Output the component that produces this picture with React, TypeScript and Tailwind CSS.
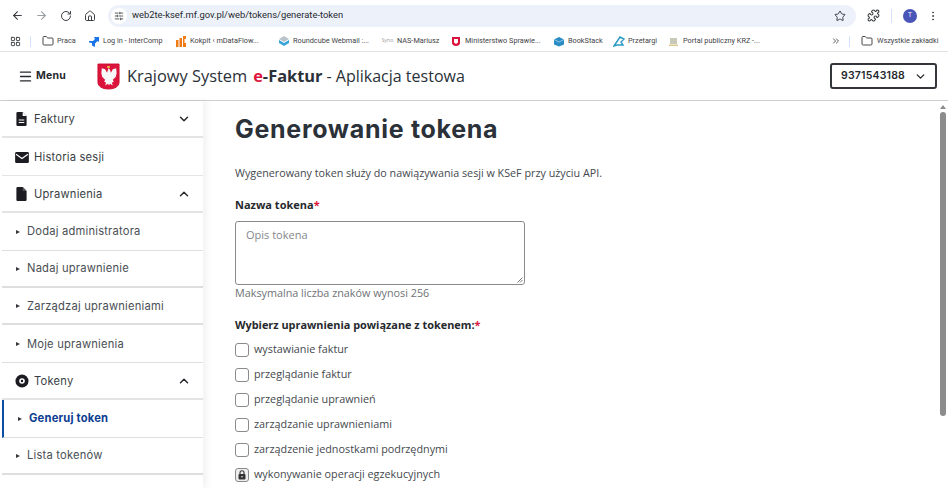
import { ArrowLeft, ArrowRight, RotateCw, House, SlidersHorizontal, Star, Puzzle, EllipsisVertical, LayoutGrid, Folder, Menu, ChevronDown, ChevronUp, ChevronsRight } from "lucide-react";

const open = "font-['Open_Sans',sans-serif]";
const mont = "font-['Inter',sans-serif]";
const roboto = "font-['Roboto',sans-serif]";

function Eagle() {
  return (
    <svg width="23" height="27" viewBox="0 0 24 28">
      <path d="M1 1h22v19c0 4-4 7-11 7S1 24 1 20z" fill="#dc143c" stroke="#c9112f" />
      <path d="M12 5l1.500 2 1 3 2-3.500 3.500-1 .5 5-1 4-3 3 1 2-2 1 1 3-3-2-1 2-1-2-3 2 1-3-2-1 1-2-3-3-1-4 .5-5 3.500 1 2 3.500 1-3z" fill="#f7f7f7" />
      <path d="M10.500 3h3v2h-3z" fill="#e5b53b" />
    </svg>
  );
}

function FileIcon({ lines }: { lines?: boolean }) {
  return (
    <svg width="11" height="14" viewBox="0 0 14 17" preserveAspectRatio="none">
      <path d="M2 0h6.500L13.500 5v10.500a1.500 1.500 0 0 1-1.500 1.500H2a1.500 1.500 0 0 1-1.500-1.500v-14A1.500 1.500 0 0 1 2 0z" fill="#1c1c22" />
      <path d="M8.500 0v5h5z" fill={lines ? "#fff" : "#55555c"} />
      {lines && <path d="M3.500 9h7v1.400h-7zM3.500 12h7v1.400h-7z" fill="#fff" />}
    </svg>
  );
}

function Mail() {
  return (
    <svg width="14" height="11" viewBox="0 0 15 12">
      <rect width="15" height="12" rx="1.500" fill="#1c1c22" />
      <path d="M1 2.500l6.500 4.500L14 2.500" stroke="#fff" strokeWidth="1.300" fill="none" />
    </svg>
  );
}

function TokenIcon() {
  return (
    <svg width="14" height="14" viewBox="0 0 15 15">
      <circle cx="7.500" cy="7.500" r="7" fill="#1c1c22" />
      <circle cx="7.500" cy="7.500" r="3" fill="#fff" />
      <circle cx="7.500" cy="7.500" r="1.300" fill="#1c1c22" />
    </svg>
  );
}

function Bookmark({ w, icon, label }: { w: string; icon: React.ReactNode; label: string }) {
  return (
    <div className={`flex items-center gap-[3px] shrink-0 ${w}`}>
      <span className="flex w-[13px] shrink-0 items-center justify-center">{icon}</span>
      <span className={`text-[7.300px] text-[#3f4347] whitespace-nowrap ${roboto}`}>{label}</span>
    </div>
  );
}

function Row({ icon, label, chev, thin }: { icon: React.ReactNode; label: string; chev?: "up" | "down"; thin?: boolean }) {
  return (
    <div className={`flex h-[37.4px] items-center pl-[12px] pr-[12px] pt-[1px] border-[#e4e4e4] ${thin ? "border-b" : "border-b-2"}`}>
      <span className="flex w-[15px] justify-center shrink-0">{icon}</span>
      <span className="ml-[5px] text-[11.200px] text-[#3a3f45] tracking-[0.2px]">{label}</span>
      {chev === "down" && <ChevronDown size={14} strokeWidth={2.500} className="ml-auto text-[#26292d]" />}
      {chev === "up" && <ChevronUp size={14} strokeWidth={2.500} className="ml-auto text-[#26292d]" />}
    </div>
  );
}

function SubRow({ label, active, thick }: { label: string; active?: boolean; thick?: boolean }) {
  return (
    <div className={`flex h-[37.4px] items-center pt-[1px] border-[#dedede] ${thick ? "border-b-2" : "border-b"} ${active ? "border-l-2 border-l-[#0b4ea2] pl-[14px]" : "pl-[14px]"}`}>
      <span className="h-0 w-0 border-y-[2.500px] border-l-[4px] border-y-transparent border-l-[#33373b]" />
      <span className={`text-[11.200px] tracking-[0.2px] ${active ? "font-bold text-[#0b3d91] ml-[7px]" : "text-[#4a4f55] ml-[7px]"}`}>{label}</span>
    </div>
  );
}

function Check({ label, locked }: { label: string; locked?: boolean }) {
  return (
    <div className="flex h-[25px] items-center gap-[5px]">
      <span className={`flex h-[14px] w-[14px] items-center justify-center rounded-[3px] border border-[#8a8a8a] ${locked ? "bg-[#eeeeee]" : "bg-white"}`}>
        {locked && (
          <svg width="8" height="10" viewBox="0 0 8 10">
            <path d="M2 4V2.800a2 2 0 0 1 4 0V4" stroke="#333" strokeWidth="1.100" fill="none" />
            <rect x="0.500" y="4" width="7" height="5.500" rx="1" fill="#333" />
            <circle cx="4" cy="6.700" r=".8" fill="#eee" />
          </svg>
        )}
      </span>
      <span className="text-[10.800px] text-[#44484d]">{label}</span>
    </div>
  );
}

export default function App() {
  return (
    <div className={`flex h-[488px] w-[948px] flex-col overflow-hidden bg-white ${open}`}>
      {/* browser toolbar */}
      <div className="flex h-[31px] items-center pl-[11px] text-[#3b3f43]">
        <ArrowLeft size={13} />
        <ArrowRight size={13} className="ml-[11px] text-[#9a9da1]" />
        <RotateCw size={12} className="ml-[12px]" />
        <House size={12} className="ml-[12px]" />
        <div className="ml-[12px] flex h-[22px] w-[748px] items-center rounded-full bg-[#edf2fa] pl-[3px] pr-[10px]">
          <span className="flex h-[16px] w-[16px] items-center justify-center rounded-full bg-white">
            <SlidersHorizontal size={10} />
          </span>
          <span className={`ml-[5px] text-[9.400px] text-[#26292d] ${roboto}`}>web2te-ksef.mf.gov.pl/web/tokens/generate-token</span>
          <Star size={12} className="ml-auto" />
        </div>
        <Puzzle size={13} className="ml-[11px]" />
        <span className="ml-[11px] h-[14px] w-px bg-[#d3e3fd]" />
        <span className="ml-[11px] flex h-[14px] w-[14px] items-center justify-center rounded-full bg-[#4a55b8] text-[7px] text-white">T</span>
        <EllipsisVertical size={12} className="ml-[10px]" />
      </div>
      {/* bookmarks */}
      <div className="flex h-[21px] items-center border-b border-[#e3e3e3] pl-[10px]">
        <LayoutGrid size={11} className="text-[#3b3f43]" />
        <span className="ml-[9px] mr-[10px] h-[11px] w-px bg-[#d3e3fd]" />
        <Bookmark w="w-[46px]" icon={<Folder size={12} className="text-[#44484d]" />} label="Praca" />
        <Bookmark w="w-[87px]" icon={<svg width="12" height="11" viewBox="0 0 12 11"><path d="M1 5h4l2-2L6 1h5v5L9.500 5 7 7.500V11L4 9.500V7L1 6.500z" fill="#1a73e8" /></svg>} label="Log in - InterComp" />
        <Bookmark w="w-[103px]" icon={<svg width="12" height="12" viewBox="0 0 12 12"><path d="M1 5h2.500v7H1zM4.500 3H7v9H4.500zM8 1h3v3H9.500v4H11v4H8z" fill="#f07b16" /></svg>} label="Kokpit ‹ mDataFlow..." />
        <Bookmark w="w-[104px]" icon={<svg width="12" height="12" viewBox="0 0 12 12"><path d="M6 1l5 3-5 3-5-3z" fill="#b9c3ca" /><path d="M1 5l5 3 5-3v3l-5 3-5-3z" fill="#37a3d8" /></svg>} label="Roundcube Webmail :..." />
        <Bookmark w="w-[68px]" icon={<span className="text-[5px] text-[#9a9a9a]">Syno</span>} label="NAS-Mariusz" />
        <Bookmark w="w-[103px]" icon={<svg width="10" height="11" viewBox="0 0 10 11"><path d="M1 1h8v6c0 2-2 3-4 3S1 9 1 7z" fill="#dc143c" /><path d="M3 3h4v3.500L5 8 3 6.500z" fill="#fff" /></svg>} label="Ministerstwo Sprawie..." />
        <Bookmark w="w-[60px]" icon={<svg width="12" height="11" viewBox="0 0 12 11"><path d="M6 1l5 2.500v5L6 10.500 1 8.500v-5z" fill="#2a8cc4" /><path d="M1 3.500L6 6l5-2.500" stroke="#bfe0f2" strokeWidth=".7" fill="none" /></svg>} label="BookStack" />
        <Bookmark w="w-[55px]" icon={<svg width="12" height="11" viewBox="0 0 12 11"><path d="M1 10L7 1l4 2-3 3 2 3H4z" fill="none" stroke="#2a9ac4" strokeWidth="1.400" /></svg>} label="Przetargi" />
        <Bookmark w="w-[164px]" icon={<svg width="11" height="11" viewBox="0 0 11 11"><path d="M2 2h7v6H2z" fill="#c9c9b8" /><path d="M1 8.500h9V10H1z" fill="#d8c98a" /></svg>} label="Portal publiczny KRZ -..." />
        <ChevronsRight size={10} className="text-[#3b3f43]" />
        <span className="ml-[8px] mr-[11px] h-[11px] w-px bg-[#d3e3fd]" />
        <Folder size={12} className="text-[#44484d]" />
        <span className={`ml-[4px] text-[7.300px] text-[#3f4347] whitespace-nowrap ${roboto}`}>Wszystkie zakładki</span>
      </div>
      {/* app header */}
      <div className="flex h-[49px] items-center border-b border-[#cfcfcf] pl-[18px] pr-[11px]">
        <Menu size={15} strokeWidth={2.200} className="text-[#26292d]" />
        <span className={`ml-[3px] text-[10.500px] font-bold tracking-[0.2px] text-[#26292d] ${mont}`}>Menu</span>
        <span className="ml-[31px] flex"><Eagle /></span>
        <span className="ml-[7px] text-[16.400px] text-[#2b3138] whitespace-nowrap">Krajowy System</span>
        <span className="ml-[6px] text-[16.400px] font-bold text-[#2b3138] whitespace-nowrap"><span className="text-[#dc143c]">e</span>-Faktur</span>
        <span className="ml-[4px] text-[16px] text-[#2b3138] whitespace-nowrap">- Aplikacja testowa</span>
        <div className={`ml-auto flex h-[26px] w-[107px] items-center rounded-[3px] border-2 border-[#33373b] pl-[9px] text-[10.500px] font-semibold tracking-[0.2px] text-[#26292d] ${mont}`}>
          9371543188
          <ChevronDown size={13} strokeWidth={2.500} className="ml-[9px]" />
        </div>
      </div>
      {/* body */}
      <div className="flex min-h-0 flex-1">
        <aside className={`ml-[2px] w-[201px] shrink-0 shadow-[4px_0_6px_rgba(0,0,0,0.05)] ${mont}`}>
          <Row icon={<FileIcon lines />} label="Faktury" chev="down" />
          <Row icon={<Mail />} label="Historia sesji" thin />
          <Row icon={<FileIcon />} label="Uprawnienia" chev="up" />
          <SubRow label="Dodaj administratora" />
          <SubRow label="Nadaj uprawnienie" thick />
          <SubRow label="Zarządzaj uprawnieniami" thick />
          <SubRow label="Moje uprawnienia" />
          <Row icon={<TokenIcon />} label="Tokeny" chev="up" />
          <SubRow label="Generuj token" active />
          <SubRow label="Lista tokenów" thick />
        </aside>
        <main className="min-w-0 flex-1 pl-[32px] pt-[10px]">
          <h1 className={`text-[25px] font-bold leading-[36px] tracking-[0.7px] text-[#2b3138] ${mont}`}>Generowanie tokena</h1>
          <p className="mt-[18px] text-[10.750px] leading-[16px] text-[#44484d]">Wygenerowany token służy do nawiązywania sesji w KSeF przy użyciu API.</p>
          <div className="mt-[16px] text-[11px] font-bold leading-[16px] text-[#26292d]">Nazwa tokena<span className="text-[#dc143c]">*</span></div>
          <div className="relative mt-[8px] h-[64px] w-[290px] rounded-[3px] border border-[#8a8a8a] px-[10px] py-[5px] text-[11px] text-[#84888c]">
            Opis tokena
            <svg className="absolute bottom-[1px] right-[1px]" width="6" height="6" viewBox="0 0 6 6"><path d="M5.500 0.500L0.500 5.500M5.500 3L3 5.500" stroke="#555" strokeWidth=".8" /></svg>
          </div>
          <div className="text-[10.800px] leading-[16px] text-[#6e7276]">Maksymalna liczba znaków wynosi 256</div>
          <div className="mt-[16px] text-[10.900px] font-bold leading-[16px] text-[#26292d]">Wybierz uprawnienia powiązane z tokenem:<span className="text-[#dc143c]">*</span></div>
          <div className="mt-[4px]">
            <Check label="wystawianie faktur" />
            <Check label="przeglądanie faktur" />
            <Check label="przeglądanie uprawnień" />
            <Check label="zarządzanie uprawnieniami" />
            <Check label="zarządzenie jednostkami podrzędnymi" />
            <Check label="wykonywanie operacji egzekucyjnych" locked />
          </div>
        </main>
        <div className="flex w-[10px] shrink-0 flex-col items-center pt-[4px] pr-[1px]">
          <span className="h-0 w-0 border-x-[3.500px] border-b-[4px] border-x-transparent border-b-[#8c8c8c]" />
          <span className="mt-[3px] h-[304px] w-[6px] rounded-full bg-[#8c8c8c]" />
        </div>
      </div>
    </div>
  );
}
